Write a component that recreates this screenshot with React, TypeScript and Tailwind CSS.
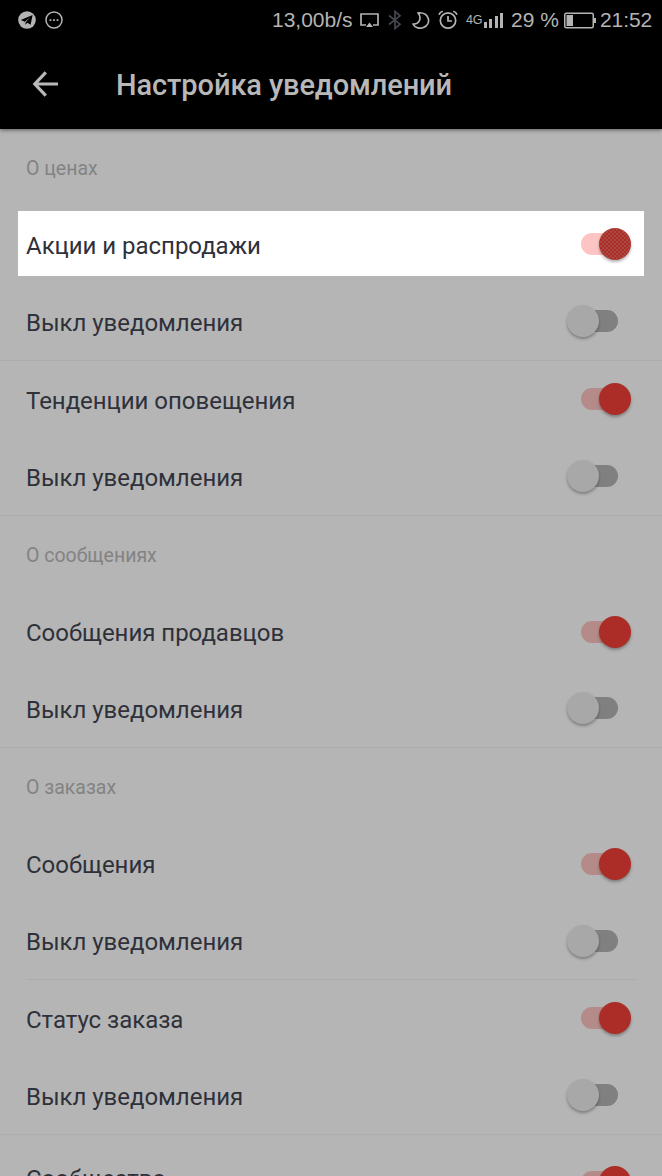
import clsx from "clsx";

type Row = {
  kind: "title" | "switch";
  label: string;
  on?: boolean;
  highlighted?: boolean;
  spaced?: boolean;
  divider?: "full" | "inset";
};

const ROWS: Row[] = [
  { kind: "title", label: "О ценах" },
  { kind: "switch", label: "Акции и распродажи", on: true, highlighted: true },
  { kind: "switch", label: "Выкл уведомления", divider: "full" },
  { kind: "switch", label: "Тенденции оповещения", on: true },
  { kind: "switch", label: "Выкл уведомления", divider: "full" },
  { kind: "title", label: "О сообщениях" },
  { kind: "switch", label: "Сообщения продавцов", on: true },
  { kind: "switch", label: "Выкл уведомления", divider: "full" },
  { kind: "title", label: "О заказах" },
  { kind: "switch", label: "Сообщения", on: true },
  { kind: "switch", label: "Выкл уведомления", divider: "inset" },
  { kind: "switch", label: "Статус заказа", on: true },
  { kind: "switch", label: "Выкл уведомления", divider: "full" },
  { kind: "switch", label: "Сообщество", on: true, spaced: true },
];

function Toggle({ on, highlighted }: { on?: boolean; highlighted?: boolean }) {
  return (
    <div className={clsx("relative w-[66px] h-8 shrink-0", !highlighted && "mb-[1px]")}>
      <div
        className={clsx(
          "absolute left-[14.5px] top-[5px] w-[37.5px] h-[22px] rounded-full",
          !on && "bg-[#808080]",
          on && (highlighted ? "bg-[#fcc5c4]" : "bg-[#b58b89]")
        )}
      />
      <div
        className={clsx(
          "absolute top-0 size-8 rounded-full shadow-[0_2px_3px_rgba(0,0,0,0.3)]",
          on ? "left-[33px] bg-[#ac2d27]" : "left-[1.4px] bg-[#a8a8a8]",
          highlighted &&
            "bg-[radial-gradient(circle,#a8665e_0.5px,transparent_0.9px),radial-gradient(circle,#a8665e_0.5px,transparent_0.9px)] bg-[size:4px_4px] bg-[position:0_0,2px_2px]"
        )}
      />
    </div>
  );
}

function StatusBar() {
  return (
    <div className="h-10 flex items-center text-[#b4b4b4] font-['Liberation_Sans',sans-serif]">
      <svg className="ml-[18px]" width="18" height="18" viewBox="0 0 18 18">
        <circle cx="9" cy="9" r="8.8" fill="currentColor" />
        <path d="M2.800 9 14.600 4 12.600 13.700 9.300 11.800 7.400 13.700 6.800 10.700Z" fill="#000" />
        <path d="m6.800 10.700 5.200-4.500-4.300 5-.3 2.300" fill="#b4b4b4" />
      </svg>
      <svg className="ml-[9px]" width="18" height="18" viewBox="0 0 18 18">
        <circle cx="9" cy="9" r="8" fill="none" stroke="currentColor" strokeWidth="1.5" />
        <path d="M4.600 8.200h1.800v1.800H4.600zm3.500 0h1.800v1.800H8.100zm3.500 0h1.800v1.800h-1.800z" fill="currentColor" />
      </svg>

      <span className="ml-[209px] mb-[2px] w-[82px] text-[21px] leading-none whitespace-nowrap">13,00b/s</span>
      <svg className="ml-[6px]" width="19" height="16" viewBox="0 0 19 16" fill="none" stroke="currentColor" strokeWidth="1.700">
        <path d="M6 13H1V2h17v11h-5" />
        <path d="m9.500 10.500 3.500 4.500H6z" fill="currentColor" stroke="none" />
      </svg>
      <svg className="ml-[9px]" width="14" height="20" viewBox="0 0 14 20" fill="none" stroke="#43464f" strokeWidth="1.700">
        <path d="m1 5.500 11 8.700-5 4.300V1.500l5 4.300-11 8.700" />
      </svg>
      <svg className="ml-[10px]" width="18" height="19" viewBox="0 0 18 19" fill="none" stroke="currentColor" strokeWidth="1.700" strokeLinejoin="round">
        <path d="M6 1.800C17.500 1 20 13 11.500 16.500 7.500 18.200 2.500 16.500 1 13 7.500 13.500 10 7 6 1.800Z" />
      </svg>
      <svg className="ml-[8px]" width="20" height="20" viewBox="0 0 20 20" fill="none" stroke="currentColor" strokeWidth="1.700">
        <circle cx="10" cy="10.500" r="7.700" />
        <path d="M10 6v5h4M1 4.800Q1.800 2 4.800 1.200M19 4.800Q18.200 2 15.200 1.200" />
      </svg>
      <span className="ml-[8px] w-[17px] text-[12.5px] tracking-[-0.3px] leading-none">4G</span>
      <svg width="21" height="16" viewBox="0 0 21 16" fill="currentColor">
        <path d="M1 10h3v6H1zM6 7h3v9H6zM12 4h3v12h-3zM17 1h3v15h-3z" />
      </svg>
      <span className="ml-[7px] mb-[2px] w-[52px] text-[21px] leading-none whitespace-nowrap">29 %</span>
      <svg className="ml-px" width="32" height="17" viewBox="0 0 32 17">
        <rect x="0.750" y="1.250" width="28.500" height="14.500" rx="1.500" fill="none" stroke="currentColor" strokeWidth="1.500" />
        <path d="M2.500 3H9v11H2.500zM30 6h2v5h-2z" fill="currentColor" />
      </svg>
      <span className="ml-[4px] mb-[2px] text-[21px] tracking-[-0.1px] leading-none">21:52</span>
    </div>
  );
}

export default function App() {
  return (
    <div className="w-[662px] h-[1176px] overflow-hidden bg-[#b5b5b5] font-[Roboto,sans-serif]">
      <header className="h-[129px] bg-black shadow-[0_1px_4px_rgba(0,0,0,0.5)]">
        <StatusBar />
        <div className="h-[89px] flex items-center text-[#b8b8b8]">
          <svg className="ml-[32px] mb-[2px]" width="28" height="28" viewBox="0 0 28 28" fill="none" stroke="currentColor" strokeWidth="3.200">
            <path d="M26 14H3M13.800 2.300 2.800 14l11 11.700" />
          </svg>
          <h1 className="ml-[56px] pt-[2px] text-[29px] tracking-[-0.1px] font-medium">Настройка уведомлений</h1>
        </div>
      </header>

      <main>
        {ROWS.map((row, i) => (
          <div
            key={i}
            className={clsx(
              "h-[77.4px] flex flex-col",
              row.highlighted && "pl-[17.5px] pr-[18px] pt-[5px] pb-2",
              row.spaced && "pt-[17px]"
            )}
          >
            <div
              className={clsx(
                "flex-1 flex items-center justify-between",
                row.highlighted ? "bg-white pl-[8.5px] pr-[12px]" : "pl-[26px] pr-[30px]"
              )}
            >
              {row.kind === "title" ? (
                <span className="pt-[1px] text-[19.5px] text-[#838383]">{row.label}</span>
              ) : (
                <>
                  <span
                    className={clsx(
                      "text-[24px] tracking-[-0.03px] text-[#2f313a]",
                      row.spaced ? "pb-[7px]" : row.highlighted ? "pt-[4px]" : "pt-[2px]"
                    )}
                  >
                    {row.label}
                  </span>
                  <Toggle on={row.on} highlighted={row.highlighted} />
                </>
              )}
            </div>
            {row.divider && (
              <div className={clsx("h-px shrink-0 bg-[#adadad]", row.divider === "inset" && "ml-[26px] mr-[25px]")} />
            )}
          </div>
        ))}
      </main>
    </div>
  );
}
